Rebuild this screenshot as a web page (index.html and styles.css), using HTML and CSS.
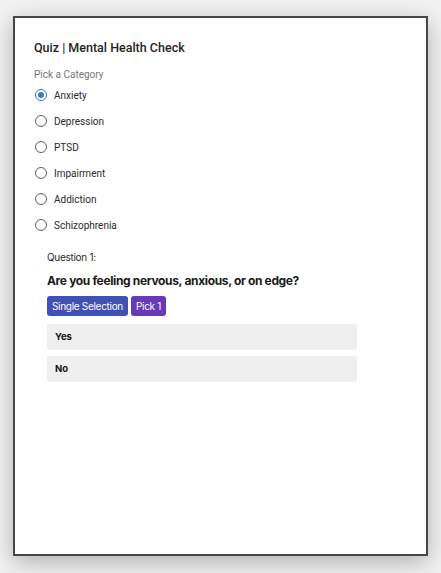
FILE: index.html
```html
<!DOCTYPE html>
<html lang="en">
<head>
<meta charset="utf-8">
<title>Quiz | Mental Health Check</title>
<link rel="stylesheet" href="styles.css">
</head>
<body>
<div class="window">
  <h1 class="title">Quiz | Mental Health Check</h1>
  <div class="category-label">Pick a Category</div>
  <ul class="radios">
    <li class="radio-row checked"><span class="radio"></span><span class="radio-text">Anxiety</span></li>
    <li class="radio-row"><span class="radio"></span><span class="radio-text">Depression</span></li>
    <li class="radio-row"><span class="radio"></span><span class="radio-text">PTSD</span></li>
    <li class="radio-row"><span class="radio"></span><span class="radio-text">Impairment</span></li>
    <li class="radio-row"><span class="radio"></span><span class="radio-text">Addiction</span></li>
    <li class="radio-row"><span class="radio"></span><span class="radio-text">Schizophrenia</span></li>
  </ul>
  <section class="question">
    <div class="q-number">Question 1:</div>
    <h2 class="q-text">Are you feeling nervous, anxious, or on edge?</h2>
    <div class="badges">
      <span class="badge badge-type">Single Selection</span>
      <span class="badge badge-pick">Pick 1</span>
    </div>
    <div class="option">Yes</div>
    <div class="option">No</div>
  </section>
</div>
</body>
</html>
```
FILE: styles.css
```css
html, body {
  margin: 0;
  padding: 0;
}
body {
  background: #f2f2f2;
  width: 441px;
  height: 573px;
  overflow: hidden;
  padding-top: 16px;
  box-sizing: border-box;
}
.window {
  margin-left: 13px;
  width: 415px;
  height: 540px;
  box-sizing: border-box;
  border: 2px solid #474747;
  background: #fff;
  box-shadow: 0 6px 22px rgba(0, 0, 0, 0.28);
  padding: 20px 19px 0 19px;
  font-family: Roboto, "Noto Sans", sans-serif;
  color: #222;
}
.title {
  margin: 0;
  font-size: 12.5px;
  font-weight: 500;
  line-height: 20px;
  color: #1f1f1f;
}
.category-label {
  margin-top: 10px;
  font-size: 10px;
  line-height: 14px;
  color: #767676;
}
.radios {
  list-style: none;
  margin: 0;
  padding: 0;
}
.radio-row {
  height: 26px;
  display: flex;
  align-items: center;
  gap: 7px;
  padding-left: 1px;
}
.radio {
  width: 12px;
  height: 12px;
  border: 1.5px solid #5c5c5c;
  border-radius: 50%;
  box-sizing: border-box;
  display: flex;
  align-items: center;
  justify-content: center;
}
.checked .radio {
  border-color: #3a78d4;
}
.checked .radio::after {
  content: "";
  width: 6px;
  height: 6px;
  border-radius: 50%;
  background: #3a78d4;
}
.radio-text {
  font-size: 10px;
  color: #2a2a2a;
}
.question {
  margin-top: 11px;
  padding-left: 13px;
  width: 310px;
  font-family: Inter, "Noto Sans", sans-serif;
}
.q-number {
  font-size: 10px;
  letter-spacing: -0.3px;
  line-height: 16px;
  color: #2a2a2a;
}
.q-text {
  margin: 7px 0 0 0;
  font-size: 12px;
  letter-spacing: -0.35px;
  font-weight: 700;
  line-height: 18px;
  color: #1a1a1a;
}
.badges {
  margin-top: 6px;
  display: flex;
  gap: 3px;
}
.badge {
  height: 20px;
  line-height: 20px;
  padding: 0 5px;
  border-radius: 3px;
  font-size: 10px;
  letter-spacing: -0.3px;
  color: #fff;
}
.badge-type {
  background: #3f51b5;
}
.badge-pick {
  background: #673ab7;
}
.option {
  margin-top: 8px;
  height: 26px;
  line-height: 26px;
  padding-left: 8px;
  background: #efefef;
  border-radius: 3px;
  font-size: 9.5px;
  font-weight: 700;
  color: #111;
}
.option + .option {
  margin-top: 6px;
}
```
